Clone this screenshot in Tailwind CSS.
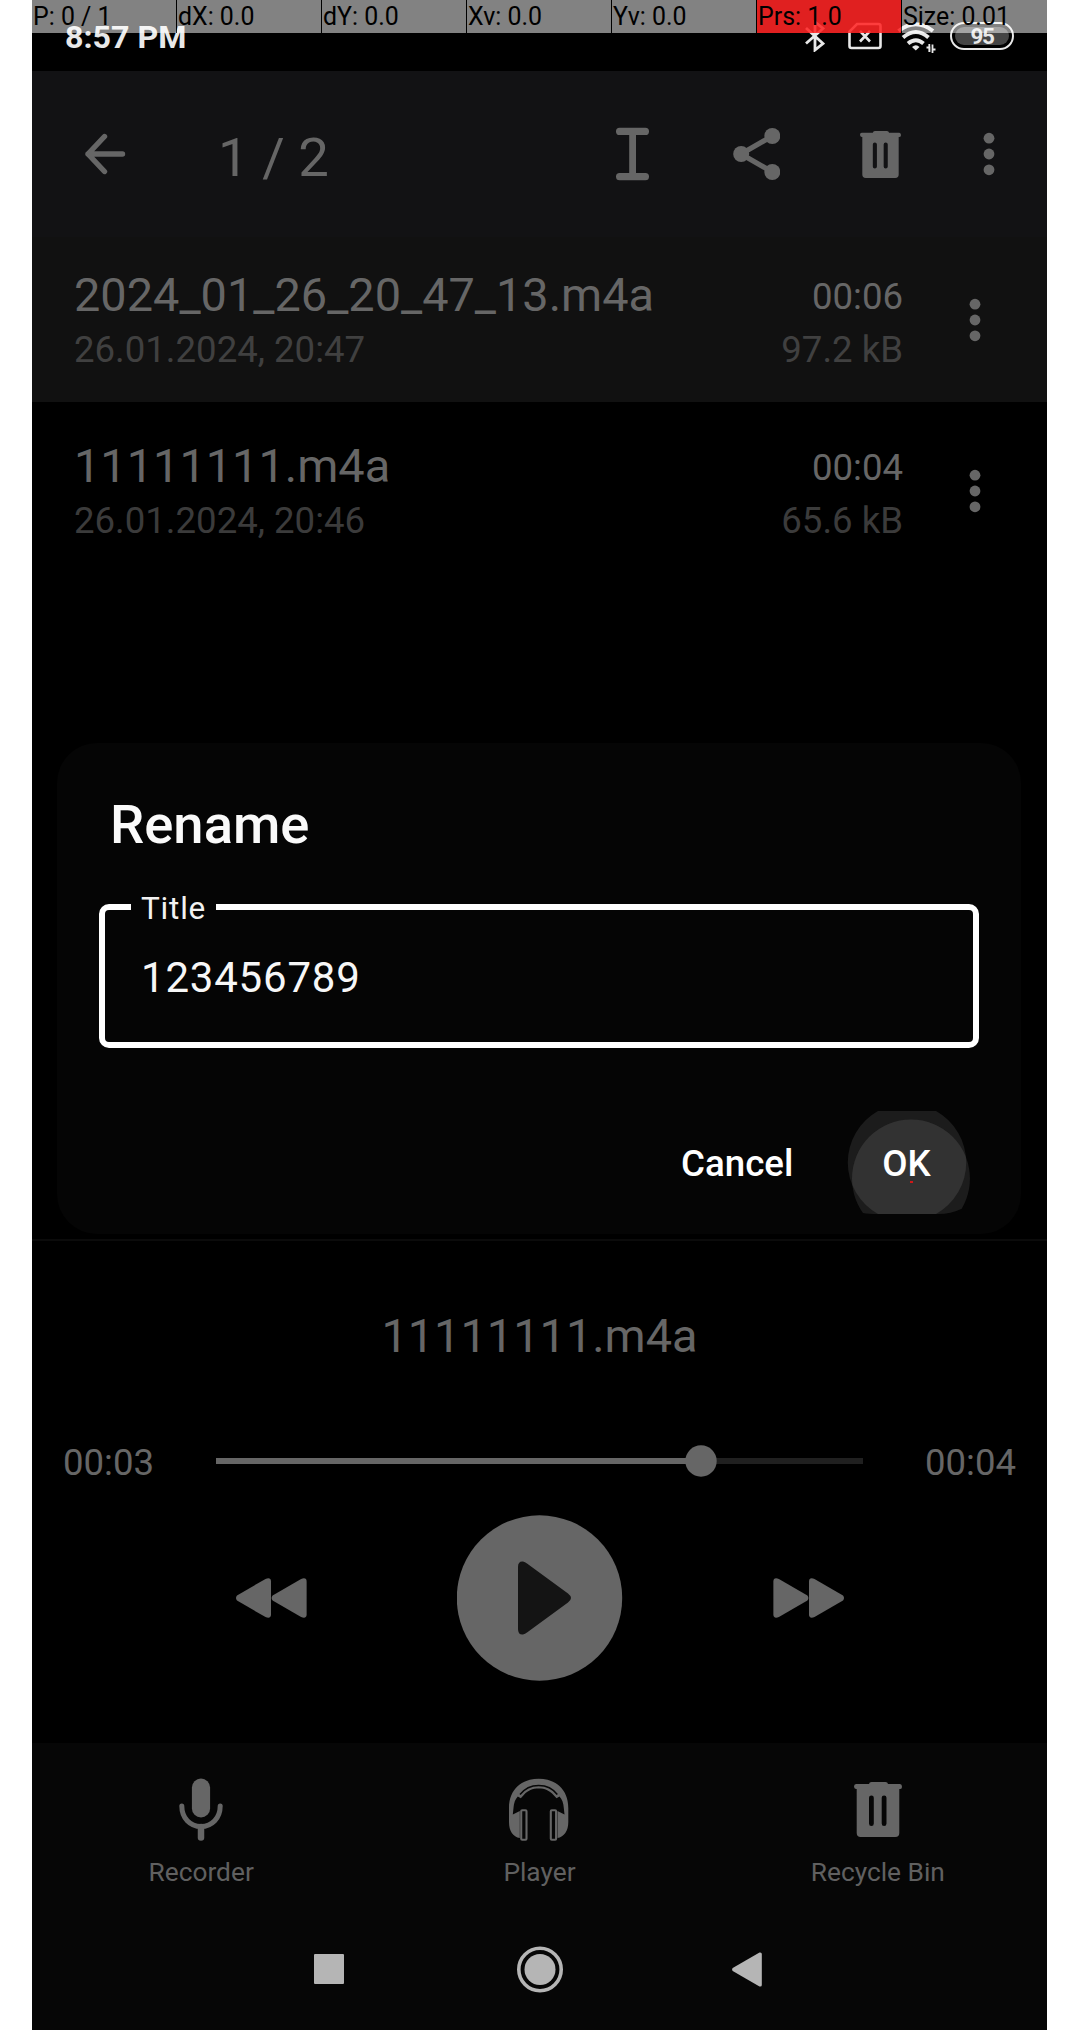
<!DOCTYPE html>
<html lang="en">
<head>
<meta charset="utf-8">
<title>Audio Recorder</title>
<script src="https://cdn.jsdelivr.net/npm/@tailwindcss/browser@4"></script>
</head>
<body class="bg-white font-['Roboto',sans-serif]">
<svg class="hidden">
  <symbol id="dots" viewBox="0 0 12 44"><circle cx="6" cy="6.2" r="5.4"/><circle cx="6" cy="22" r="5.4"/><circle cx="6" cy="37.8" r="5.4"/></symbol>
  <symbol id="trash" viewBox="0 0 48 55">
    <path fill-rule="evenodd" d="M15 2Q15.300 0 17.500 0H31.500Q33.700 0 34 2H46Q48 2.200 48 4.700T46 7H45.300V51Q45.300 55 41.300 55H6.700Q2.700 55 2.700 51V7H2Q0 6.800 0 4.500T2 2ZM15 15.800V41.500Q15 44 17.400 44T19.800 41.500V15.800Q19.800 13.500 17.400 13.500T15 15.800ZM27.700 15.800V41.500Q27.700 44 30.100 44T32.500 41.500V15.800Q32.500 13.500 30.100 13.500T27.700 15.800Z"/>
  </symbol>
</svg>
<main class="relative ml-8 flex h-[2030px] w-[1015px] flex-col overflow-hidden bg-black text-[#666] whitespace-nowrap">

  <!-- status bar -->
  <div class="flex h-[71px] shrink-0 items-start justify-between bg-black pl-[33px] text-[#e8e8e8]">
    <span class="mt-[17px] text-[32.200px] leading-[40px] font-bold">8:57 PM</span>
    <div class="flex pr-[33px]">
      <svg class="mt-5 mr-[23px] h-8 w-5" viewBox="0 0 20 32" fill="none" stroke="#e8e8e8" stroke-width="2.800"><path d="M1 8 18 23.500 10 30V2L18 8.500 1 23.500"/></svg>
      <svg class="mt-[22px] mr-[15px] h-7 w-[34px]" viewBox="0 0 34 28" fill="none" stroke="#e8e8e8" stroke-width="2.600"><path d="M9 2H30.500Q32.500 2 32.500 4V24Q32.500 26 30.500 26H3.500Q1.500 26 1.500 24V9.500Z"/><path d="M12 9 22 19.500M22 9 12 19.500"/></svg>
      <svg class="mt-[22px] mr-[14px] h-8 w-[39px]" viewBox="0 0 39 32" fill="none" stroke="#e8e8e8" stroke-width="4"><path d="M1.500 9Q19 -4.500 36 9"/><path d="M6 15.500Q19 4.500 31.500 15.500"/><path d="M11 21.500Q19 15 26.500 21.500"/><path d="M15 25Q19 21.500 22.500 25L18.800 28.500Z" fill="#e8e8e8" stroke="none"/><path d="M29.500 25.500H32.500V30M32.300 22V30M35.500 31V22.500M35.500 27.500H38.500" stroke-width="1.800"/></svg>
      <div class="mt-[22px] flex h-7 w-16 items-center justify-center rounded-full border-[2.500px] border-[#e8e8e8] p-[3px]">
        <span class="h-full w-full rounded-full bg-[#454545] text-center text-[22.500px] leading-[19px] font-bold tracking-[-1.500px]">95</span>
      </div>
    </div>
  </div>

  <!-- selection toolbar -->
  <header class="relative z-10 flex h-[166px] shrink-0 items-center bg-[#121214] pr-[52px]">
    <svg class="ml-[52px] h-[42px] w-[42px]" viewBox="0 0 42 42" fill="none" stroke="#666" stroke-width="5.400" stroke-linecap="round" stroke-linejoin="round"><path d="M38.500 21H4M20.500 3.500 4 21 20.500 38.500"/></svg>
    <span class="mt-[6px] ml-[92px] text-[54.500px] leading-[64px]">1 / 2</span>
    <div class="ml-auto flex items-center">
      <svg class="mr-[84px] h-[54px] w-[33px]" viewBox="0 0 33 54" fill="#666"><rect y="0.700" width="33" height="7.300" rx="3.600"/><rect y="46" width="33" height="7.300" rx="3.600"/><rect x="13.200" y="5" width="6.800" height="44"/></svg>
      <svg class="mr-[80px] h-[54px] w-[47px]" viewBox="0 0 47 54" fill="#666"><path d="M39.300 9 8 27 39.300 45" fill="none" stroke="#666" stroke-width="5.200"/><circle cx="8.200" cy="27" r="8"/><circle cx="39.300" cy="9" r="8"/><circle cx="39.300" cy="45" r="8"/></svg>
      <svg class="mr-[82px] h-[47px] w-[41px]" fill="#666"><use href="#trash"/></svg>
      <svg class="h-11 w-3" fill="#666"><use href="#dots"/></svg>
    </div>
  </header>

  <!-- recordings -->
  <section class="-mt-[6px] flex flex-col">
    <div class="flex h-[171px] bg-[#111] pr-[66px] pl-[42px]">
      <div class="flex flex-col gap-[5px] pt-9"><span class="text-[46.900px] leading-[56px]">2024_01_26_20_47_13.m4a</span><span class="text-[36.600px] leading-[44px] text-[#404040]">26.01.2024, 20:47</span></div>
      <div class="ml-auto flex flex-col gap-[9px] pt-[44px] text-right text-[36.600px] leading-[44px]"><span>00:06</span><span class="text-[#404040]">97.2 kB</span></div>
      <svg class="mt-[67px] ml-[66px] h-11 w-3" fill="#666"><use href="#dots"/></svg>
    </div>
    <div class="flex h-[171px] pr-[66px] pl-[42px]">
      <div class="flex flex-col gap-[5px] pt-9"><span class="text-[46.900px] leading-[56px]">11111111.m4a</span><span class="text-[36.600px] leading-[44px] text-[#3b3b3b]">26.01.2024, 20:46</span></div>
      <div class="ml-auto flex flex-col gap-[9px] pt-[44px] text-right text-[36.600px] leading-[44px]"><span>00:04</span><span class="text-[#3b3b3b]">65.6 kB</span></div>
      <svg class="mt-[67px] ml-[66px] h-11 w-3" fill="#666"><use href="#dots"/></svg>
    </div>
  </section>

  <!-- player -->
  <section class="mt-auto flex h-[504px] shrink-0 flex-col border-t-2 border-[#0b0b0b]">
    <span class="mt-[67px] text-center text-[46.900px] leading-[56px]">11111111.m4a</span>
    <div class="mt-[74px] flex h-11 items-center justify-between pr-[31px] pl-[31px]">
      <span class="mt-[5px] text-[36.600px] leading-[44px]">00:03</span>
      <svg class="mt-[2px] h-8 w-[647px]" viewBox="0 0 647 32"><rect y="13" width="647" height="6" fill="#202020"/><rect y="13" width="485" height="6" fill="#666"/><circle cx="485" cy="16" r="15.700" fill="#666"/></svg>
      <span class="mt-[5px] text-[36.600px] leading-[44px]">00:04</span>
    </div>
    <div class="mt-[33px] flex items-center pl-[204px]">
      <svg class="h-10 w-[71px]" viewBox="0 0 71 40" fill="#666"><path id="rw" d="M1 17.500 29.500 .900Q35 -1 35 3.500V36.500Q35 41 29.500 39.100L1 22.500Q-1 20 1 17.500Z"/><use href="#rw" x="35.600"/></svg>
      <svg class="ml-[150px] h-[166px] w-[166px]" viewBox="0 0 166 166"><circle cx="82.500" cy="83" r="82.700" fill="#666"/><path d="M61 52Q61 46 66 46.500 68 47 70 48.500L111 78.500Q117 83 111 87.500L70 117.500Q68 119 66 119.500 61 120 61 114Z" fill="#141414"/></svg>
      <svg class="ml-[150px] h-10 w-[71px]" viewBox="0 0 71 40" fill="#666"><g transform="matrix(-1 0 0 1 71 0)"><use href="#rw"/><use href="#rw" x="35.600"/></g></svg>
    </div>
  </section>

  <!-- bottom tabs -->
  <nav class="grid h-[167px] shrink-0 grid-cols-3 bg-[#060606] text-center text-[26.300px] leading-8 text-[#606060]">
    <div class="flex flex-col items-center">
      <svg class="mt-[35px] h-[63px] w-11" viewBox="0 0 44 63" fill="#666"><rect x="12.900" y="0.500" width="18.200" height="39" rx="9.100"/><path d="M2.800 28C2.800 40 11 48.500 22 48.500S41.200 40 41.200 28" fill="none" stroke="#666" stroke-width="5" stroke-linecap="round"/><path d="M22 49V59.500" stroke="#666" stroke-width="6.500" stroke-linecap="round"/></svg>
      <span class="mt-[15px]">Recorder</span>
    </div>
    <div class="flex flex-col items-center">
      <svg class="mt-[27px] h-20 w-20" viewBox="0 0 80 80" fill="#666">
        <path d="M10 38C10 19 23 8.700 39.700 8.700S69.300 19 69.300 38V52C69.300 61 65 67 58.500 68V41L65.500 44.500 64.800 38C64.500 33 63 29 60.500 26.500L57.500 28.200 54.500 25C50 20.500 46 18.600 39.700 18.600S29 20.500 24.800 25L21.800 28.200 18.800 26.500C16.300 29 14.800 33 14.500 38L13.800 44.500 20.800 41V68C14 67 10 61 10 52Z"/>
        <path d="M21 24.500C26 18 32 15.400 39.700 15.400S53.500 18 58.300 24.500" fill="none" stroke="#060606" stroke-width="1.500"/>
        <rect x="22.200" y="40.300" width="5.300" height="29.500" rx="1" fill="#060606" stroke="#666" stroke-width="2.100"/><rect x="51.800" y="40.300" width="5.300" height="29.500" rx="1" fill="#060606" stroke="#666" stroke-width="2.100"/>
      </svg>
      <span class="mt-[6px]">Player</span>
    </div>
    <div class="flex flex-col items-center">
      <svg class="mt-[39px] h-[55px] w-12" fill="#666"><use href="#trash"/></svg>
      <span class="mt-[19px]">Recycle Bin</span>
    </div>
  </nav>

  <!-- system navigation -->
  <div class="flex h-[120px] shrink-0 items-start bg-[#060606] pl-[282px]">
    <div class="mt-[44px] h-[30px] w-[30px] rounded-[1px] bg-[#b5b5b5]"></div>
    <svg class="ml-[173px] mt-[36px] h-[47px] w-[46px]" viewBox="0 0 46 47"><circle cx="23" cy="23.500" r="21.200" fill="none" stroke="#b5b5b5" stroke-width="3.600"/><circle cx="23" cy="23.500" r="15.500" fill="#b5b5b5"/></svg>
    <svg class="ml-[169px] mt-[42px] h-[35px] w-[30px]" viewBox="0 0 30 35" fill="#b5b5b5"><path d="M.7 16 27.500 .500Q29.800 0 29.800 2V33Q29.800 35 27.500 34.500L.7 19Q-.5 17.500 .7 16Z"/></svg>
  </div>

  <!-- rename dialog -->
  <div class="absolute top-[743px] left-[25px] flex h-[491px] w-[964px] flex-col rounded-[40px] bg-[#050505] text-white">
    <h2 class="mt-[50px] ml-[53px] text-[54.400px] leading-[64px] font-medium text-[#fafafa]">Rename</h2>
    <div class="relative mx-[42px] mt-[47px] flex h-[144px] items-center rounded-[10px] border-[6px] border-white pl-[36px]">
      <span class="absolute -top-[21px] left-[26px] bg-[#050505] px-[10px] text-[31.500px] leading-[40px] tracking-[0.800px] text-[#f2f2f2]">Title</span>
      <span class="mt-[4px] text-[42px] leading-[50px] tracking-[0.800px] text-[#f7f7f7]">123456789</span>
    </div>
    <div class="relative mt-[63px] flex h-[103px] items-center text-[36.700px] leading-[44px] font-medium">
      <svg class="absolute top-0 left-[789px] h-[103px] w-[126px]" viewBox="0 0 126 103">
        <path d="M32 0H90A59 59 0 0 1 90 103H32A59 59 0 0 1 32 0Z" fill="#1c1c1c"/>
        <path d="M17 102A59 59 0 1 1 115.700 97.700Q105 103 92 103H32Q22 103 17 102Z" fill="#1c1c1c"/>
        <clipPath id="first"><path d="M32 0H90A59 59 0 0 1 90 103H32A59 59 0 0 1 32 0Z"/></clipPath>
        <circle cx="65" cy="67.500" r="59" fill="#323232" clip-path="url(#first)"/>
      </svg>
      <span class="relative mt-[2px] ml-[624px]">Cancel</span>
      <span class="relative mt-[2px] ml-[89px]">OK</span>
      <i class="absolute top-[70px] left-[853px] h-[2px] w-[3px] bg-[#d01818]"></i>
    </div>
  </div>

  <!-- pointer location overlay -->
  <div class="absolute inset-x-0 top-0 grid h-[33px] grid-cols-7 text-[24.900px] leading-[33px] text-black">
    <span class="border-r border-black/80 bg-white/51 bg-clip-padding pl-px">P: 0 / 1</span>
    <span class="border-r border-black/80 bg-white/51 bg-clip-padding pl-px">dX: 0.0</span>
    <span class="border-r border-black/80 bg-white/51 bg-clip-padding pl-px">dY: 0.0</span>
    <span class="border-r border-black/80 bg-white/51 bg-clip-padding pl-px">Xv: 0.0</span>
    <span class="border-r border-black/80 bg-white/51 bg-clip-padding pl-px">Yv: 0.0</span>
    <span class="border-r border-black/80 bg-[#ff2424]/88 bg-clip-padding pl-px">Prs: 1.0</span>
    <span class="bg-white/51 pl-px">Size: 0.01</span>
  </div>
</main>
</body>
</html>
